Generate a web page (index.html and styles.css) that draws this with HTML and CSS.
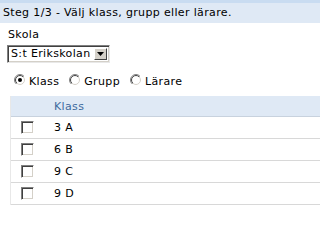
FILE: index.html
```html
<!DOCTYPE html>
<html lang="sv">
<head>
<meta charset="utf-8">
<link rel="stylesheet" href="styles.css">
</head>
<body>
<svg width="0" height="0" class="defs">
  <defs>
    <linearGradient id="outer" x1="0" y1="0" x2="1" y2="1">
      <stop offset="0.5" stop-color="#808080"/>
      <stop offset="0.5" stop-color="#ffffff"/>
    </linearGradient>
    <linearGradient id="inner" x1="0" y1="0" x2="1" y2="1">
      <stop offset="0.5" stop-color="#404040"/>
      <stop offset="0.5" stop-color="#d4d0c8"/>
    </linearGradient>
  </defs>
</svg>
<div class="topline"></div>
<div class="step">Steg 1/3 - Välj klass, grupp eller lärare.</div>
<div class="field">
  <div class="label">Skola</div>
  <div class="select">
    <span class="select-text">S:t Erikskolan</span>
    <span class="select-btn"><svg width="7" height="4" viewBox="0 0 7 4"><path d="M0 0h7L3.5 4z" fill="#000"/></svg></span>
  </div>
</div>
<div class="radios">
  <label class="radio"><svg class="rb" width="12" height="12" viewBox="0 0 12 12"><circle cx="6" cy="6" r="5.5" fill="#fff" stroke="url(#outer)"/><circle cx="6" cy="6" r="4.5" fill="#fff" stroke="url(#inner)"/><circle cx="6" cy="6" r="2" fill="#000"/></svg>Klass</label>
  <label class="radio"><svg class="rb" width="12" height="12" viewBox="0 0 12 12"><circle cx="6" cy="6" r="5.5" fill="#fff" stroke="url(#outer)"/><circle cx="6" cy="6" r="4.5" fill="#fff" stroke="url(#inner)"/></svg>Grupp</label>
  <label class="radio"><svg class="rb" width="12" height="12" viewBox="0 0 12 12"><circle cx="6" cy="6" r="5.5" fill="#fff" stroke="url(#outer)"/><circle cx="6" cy="6" r="4.5" fill="#fff" stroke="url(#inner)"/></svg>Lärare</label>
</div>
<div class="table">
  <div class="row head"><span class="cb-cell"></span><span class="name">Klass</span></div>
  <div class="row"><span class="cb-cell"><span class="cb"></span></span><span class="name">3 A</span></div>
  <div class="row"><span class="cb-cell"><span class="cb"></span></span><span class="name">6 B</span></div>
  <div class="row"><span class="cb-cell"><span class="cb"></span></span><span class="name">9 C</span></div>
  <div class="row"><span class="cb-cell"><span class="cb"></span></span><span class="name">9 D</span></div>
</div>
</body>
</html>
```
FILE: styles.css
```css
body {
  margin: 0;
  background: #fff;
  font-family: "DejaVu Sans", Verdana, sans-serif;
  font-size: 11px;
  letter-spacing: 0.35px;
  color: #000;
}
.defs {
  position: absolute;
}
.topline {
  height: 3px;
  background: #c9dcf1;
}
.step {
  height: 20px;
  line-height: 20px;
  padding-left: 3px;
  background: #dfe9f5;
  white-space: nowrap;
}
.field {
  padding: 4px 0 0 8px;
}
.label {
  line-height: 16px;
}
.select {
  margin-top: 2px;
  margin-left: -1px;
  width: 103px;
  height: 18px;
  box-sizing: border-box;
  display: flex;
  align-items: center;
  background: #fff;
  border-style: solid;
  border-width: 1px;
  border-color: #808080 #e8e8e8 #e8e8e8 #808080;
  box-shadow: inset 1px 1px #404040, inset -1px -1px #d4d0c8;
  padding: 2px 2px 2px 3px;
}
.select-text {
  flex: 1;
  line-height: 14px;
  white-space: nowrap;
}
.select-btn {
  width: 13px;
  height: 12px;
  box-sizing: border-box;
  background: #d4d0c8;
  border-style: solid;
  border-width: 1px;
  border-color: #fff #404040 #404040 #fff;
  display: flex;
  align-items: center;
  justify-content: center;
}
.radios {
  display: flex;
  padding: 10px 0 0 14px;
  height: 16px;
  align-items: center;
}
.radio {
  display: flex;
  align-items: center;
  margin-right: 10px;
}
.rb {
  margin-right: 3px;
  margin-top: -2px;
}
.table {
  margin: 7px 0 0 10px;
  border-left: 1px solid #e8e8e8;
}
.row {
  display: flex;
  align-items: center;
  height: 21px;
  border-bottom: 1px solid #d8d8d8;
}
.row.head {
  height: 20px;
  background: #dfe9f5;
  color: #3e6b9e;
  border-bottom: 1px solid #c8d2de;
}
.cb-cell {
  width: 43px;
  display: flex;
  padding-left: 10px;
  box-sizing: border-box;
}
.cb {
  width: 13px;
  height: 13px;
  box-sizing: border-box;
  background: #fff;
  border-style: solid;
  border-width: 1px;
  border-color: #808080 #fff #fff #808080;
  box-shadow: inset 1px 1px #404040, inset -1px -1px #d4d0c8;
}
```
